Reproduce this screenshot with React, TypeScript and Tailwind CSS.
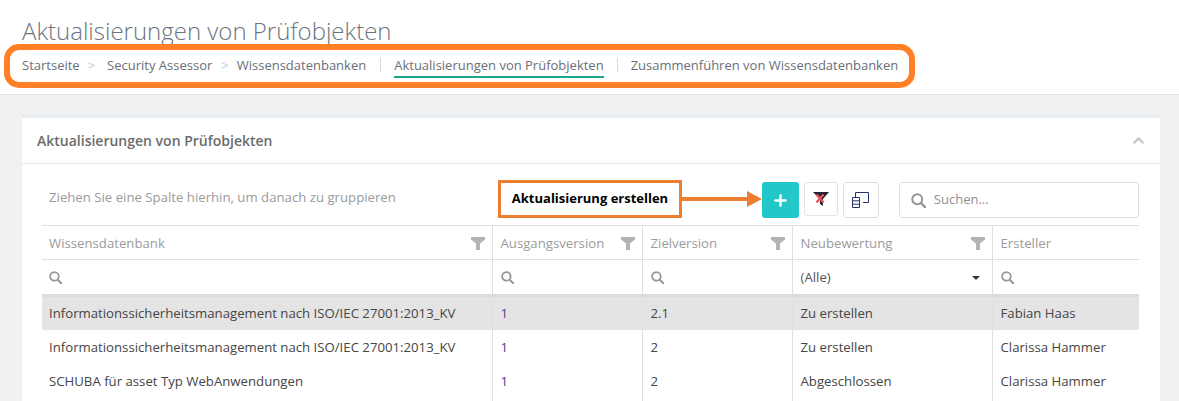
import { Plus, ChevronUp } from "lucide-react";

const rows = [
  { kb: "Informationssicherheitsmanagement nach ISO/IEC 27001:2013_KV", from: "1", to: "2.1", state: "Zu erstellen", by: "Fabian Haas", selected: true },
  { kb: "Informationssicherheitsmanagement nach ISO/IEC 27001:2013_KV", from: "1", to: "2", state: "Zu erstellen", by: "Clarissa Hammer", selected: false },
  { kb: "SCHUBA für asset Typ WebAnwendungen", from: "1", to: "2", state: "Abgeschlossen", by: "Clarissa Hammer", selected: false },
  { kb: "", from: "", to: "", state: "", by: "", selected: false },
];

const columns = [
  { label: "Wissensdatenbank", filter: true },
  { label: "Ausgangsversion", filter: true },
  { label: "Zielversion", filter: true },
  { label: "Neubewertung", filter: true },
  { label: "Ersteller", filter: false },
];

function Funnel() {
  return (
    <svg width="14" height="13" viewBox="0 0 14 13" className="shrink-0">
      <path d="M0 0h14v2.500L9 6.500V13H5V6.500L0 2.500z" fill="#b3b3b3" />
    </svg>
  );
}

function Magnifier({ size = 13, color = "#959595" }: { size?: number; color?: string }) {
  return (
    <svg width={size} height={size} viewBox="0 0 13 13" fill="none" className="shrink-0">
      <circle cx="5.4" cy="5.4" r="4.3" stroke={color} strokeWidth="1.7" />
      <path d="M8.6 8.600l3.600 3.600" stroke={color} strokeWidth="2" strokeLinecap="round" />
    </svg>
  );
}

export default function App() {
  return (
    <div className="relative h-[401px] w-[1179px] overflow-hidden bg-[#f1f1f1] font-['Open_Sans',sans-serif] text-[13.2px] text-[#454545]">
      <header className="h-[95px] border-b border-[#e3e3e3] bg-white px-[22px] pt-[14px]">
        <h1 className="text-[24px] leading-[34px] font-light text-[#6b7580]">Aktualisierungen von Prüfobjekten</h1>
        <nav className="mt-[5px] flex items-center text-[13px] text-[#6a7078]">
          <span>Startseite</span>
          <span className="ml-[8px] mr-[12px] text-[#c6c9cc]">&gt;</span>
          <span>Security Assessor</span>
          <span className="ml-[9px] mr-[8px] text-[#c6c9cc]">&gt;</span>
          <span>Wissensdatenbanken</span>
          <span className="ml-[14px] mr-[13px] h-[14px] w-px bg-[#d5d8dc]" />
          <span className="border-b-2 border-[#1aa58c] pt-[3px]">Aktualisierungen von Prüfobjekten</span>
          <span className="ml-[13px] mr-[13px] h-[14px] w-px bg-[#d5d8dc]" />
          <span>Zusammenführen von Wissensdatenbanken</span>
        </nav>
      </header>

      <main className="pl-[22px] pr-[19px] pt-[20px]">
        <section className="min-h-[290px] border-t-[3px] border-[#e7ecf1] bg-white">
          <div className="flex h-[46px] items-center justify-between border-b border-[#e7e7e7] pl-[15px] pr-[13px]">
            <h2 className="text-[14px] font-semibold text-[#6b6b6b]">Aktualisierungen von Prüfobjekten</h2>
            <ChevronUp size={17} strokeWidth={3} color="#c8c8c8" />
          </div>

          <div className="px-[20px]">
            <div className="flex h-[61px] items-start pt-[18px]">
              <span className="ml-[7px] mt-[6px] text-[#9a9a9a]">Ziehen Sie eine Spalte hierhin, um danach zu gruppieren</span>
              <button className="ml-[366px] flex h-[36px] w-[37px] items-center justify-center rounded-[3px] bg-[#22c7c9] text-white">
                <Plus size={17} strokeWidth={3.5} />
              </button>
              <button className="ml-[5px] flex h-[34px] w-[34px] items-center justify-center rounded-[3px] border border-[#e3e3e3]">
                <svg width="16" height="16" viewBox="0 0 16 16">
                  <path d="M0 1h16L10 8v7l-3-2V8z" fill="#1f2430" />
                  <path d="M3.500 3.500l7 8M10.500 3.500l-7 8" stroke="#ea4f5c" strokeWidth="2.4" />
                </svg>
              </button>
              <button className="ml-[5px] flex h-[36px] w-[36px] items-center justify-center rounded-[3px] border border-[#dedede]">
                <svg width="17" height="16" viewBox="0 0 17 16" fill="none" stroke="#27346a" strokeWidth="1">
                  <path d="M3.500 5V.5h13v10H11" />
                  <path d="M.5 5.500h7v10h-7zM.5 8.800h7M.5 12.200h7" />
                </svg>
              </button>
              <label className="ml-[20px] flex h-[36px] w-[240px] items-center gap-[8px] rounded-[3px] border border-[#dedede] px-[11px] text-[13px] text-[#8f8f8f]">
                <Magnifier size={15} />
                Suchen...
              </label>
            </div>

            <table className="w-[1097px] table-fixed border-collapse border-t border-[#e0e0e0]">
              <colgroup>
                <col className="w-[450px]" />
                <col className="w-[150px]" />
                <col className="w-[150px]" />
                <col className="w-[200px]" />
                <col className="w-[147px]" />
              </colgroup>
              <thead>
                <tr className="h-[34px] border-b border-[#e0e0e0]">
                  {columns.map((c, i) => (
                    <th key={c.label} className={`pt-[2px] font-normal text-[#9b9b9b] ${i > 0 ? "border-l border-[#e0e0e0] pl-[8px] pr-[7px]" : "px-[7px]"}`}>
                      <div className="flex items-center justify-between">
                        <span>{c.label}</span>
                        {c.filter && <Funnel />}
                      </div>
                    </th>
                  ))}
                </tr>
                <tr className="h-[36px] border-b-[3px] border-[#dcdcdc]">
                  {columns.map((c, i) => (
                    <th key={c.label} className={`font-normal ${i > 0 ? "border-l border-[#e0e0e0] pl-[8px] pr-[7px]" : "px-[7px]"}`}>
                      {c.label === "Neubewertung" ? (
                        <div className="flex items-center justify-between pr-[5px] pt-[2px] text-[#555]">
                          <span>(Alle)</span>
                          <span className="h-0 w-0 border-x-[4px] border-t-[4px] border-x-transparent border-t-[#333]" />
                        </div>
                      ) : (
                        <Magnifier />
                      )}
                    </th>
                  ))}
                </tr>
              </thead>
              <tbody>
                {rows.map((r, idx) => (
                  <tr key={idx} className={r.selected ? "h-[34px] bg-[#e4e4e4]" : "h-[34px]"}>
                    <td className="px-[7px] pt-[2px]">{r.kb}</td>
                    <td className="border-l border-[#e0e0e0] pl-[8px] pt-[2px] text-[#4b3a8f]">{r.from}</td>
                    <td className="border-l border-[#e0e0e0] pl-[8px] pt-[2px]">{r.to}</td>
                    <td className="border-l border-[#e0e0e0] pl-[8px] pt-[2px]">{r.state}</td>
                    <td className="border-l border-[#e0e0e0] pl-[8px] pt-[2px]">{r.by}</td>
                  </tr>
                ))}
              </tbody>
            </table>
          </div>
        </section>
      </main>

      {/* annotations drawn over the screenshot */}
      <div className="absolute left-[4px] top-[44px] h-[44px] w-[911px] rounded-[15px] border-[6px] border-[#ff8027]" />
      <div className="absolute left-[498px] top-[180px] flex h-[38px] w-[184px] items-center justify-center border-[3px] border-[#ed7d31] bg-white text-[13px] font-bold text-black">
        Aktualisierung erstellen
      </div>
      <svg className="absolute left-[682px] top-[190px]" width="80" height="18" viewBox="0 0 80 18">
        <path d="M0 7h65V1l15 8-15 8v-6H0z" fill="#ed7d31" />
      </svg>
    </div>
  );
}
